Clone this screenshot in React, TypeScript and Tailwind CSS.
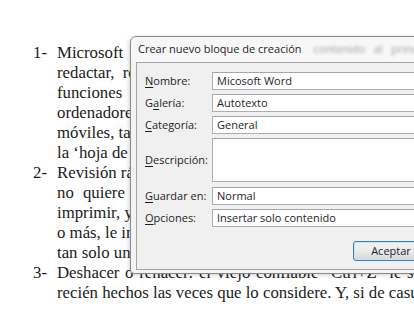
import React from "react";

const serif = { fontFamily: '"Liberation Serif", "Times New Roman", serif' };

function Line({ num, children, cls = "" }: { num?: string; children: React.ReactNode; cls?: string }) {
  return (
    <div className="flex h-[20px] items-center whitespace-nowrap">
      <div className="w-[24px] shrink-0">{num ?? ""}</div>
      <div className={cls}>{children}</div>
    </div>
  );
}

function Field({ children, tall = false }: { children?: React.ReactNode; tall?: boolean }) {
  return (
    <div
      className={`flex ${tall ? "h-[44px]" : "h-[18px]"} items-center whitespace-nowrap border border-[#abadb3] border-t-[#a3a6ad] bg-white pl-[4px] text-[#1e1e1e]`}
    >
      {children}
    </div>
  );
}

function Label({ pre, u, post }: { pre?: string; u: string; post: string }) {
  return (
    <div className="w-[67px] shrink-0 whitespace-nowrap text-[#1e1e1e]">
      {pre}
      <span className="underline underline-offset-[2px]">{u}</span>
      {post}
    </div>
  );
}

export default function App() {
  return (
    <div className="relative h-[314px] w-[414px] overflow-hidden bg-white">
      <div className="pl-[33px] pt-[43px] text-[16.8px] text-[#1b1b1b]" style={serif}>
        <Line num="1-" cls="[word-spacing:6px]">Microsoft Word es el procesador de textos más utilizado al momento de</Line>
        <Line cls="[word-spacing:4px]">redactar, revisar y editar documentos de todo tipo. Cuenta con</Line>
        <Line cls="[word-spacing:9px]">funciones muy útiles para el trabajo diario, tanto en</Line>
        <Line>ordenadores de escritorio como en portátiles y dispositivos</Line>
        <Line>móviles, tabletas y teléfonos. Su principal área de trabajo es</Line>
        <Line>la ‘hoja de papel’ en blanco.</Line>
        <Line num="2-">Revisión rápida de ortografía: si usted</Line>
        <Line cls="[word-spacing:5px]">no quiere perder tiempo revisando el texto antes de</Line>
        <Line>imprimir, y el documento tiene diez páginas</Line>
        <Line>o más, le indicará los errores con</Line>
        <Line>tan solo un clic.</Line>
        <Line num="3-" cls="[word-spacing:1.5px]">Deshacer o rehacer: el viejo confiable "Ctrl+Z" le será de ayuda para los cambios</Line>
        <Line>recién hechos las veces que lo considere. Y, si de casualidad se equivoca</Line>
      </div>

      <div
        className="absolute left-[130px] top-[36px] flex h-[238px] w-[300px] flex-col rounded-tl-[6px] rounded-bl-[4px] border border-[#8a8a8a] bg-[#f3f3f3] shadow-[-1px_1px_4px_rgba(0,0,0,0.18)]"
        style={{ fontFamily: '"Open Sans", "Noto Sans", sans-serif' }}
      >
        <div className="flex h-[25px] shrink-0 items-center overflow-hidden whitespace-nowrap rounded-tl-[6px] bg-[#f7f7f7] pl-[7px] text-[11px] text-[#1e1e1e]">
          <span className="shrink-0">Crear nuevo bloque de creación</span>
          <span className="ml-[12px] shrink-0 text-[#a0a0a0] blur-[1.4px]">
            contenido &nbsp; al &nbsp; principio
          </span>
        </div>
        <div className="mb-[3px] ml-[5px] flex flex-1 flex-col border-b border-l border-t border-[#a5a5a5] bg-[#f0f0f0] pl-[8px] pt-[9px] text-[11px]">
          <div className="flex items-center">
            <Label u="N" post="ombre:" />
            <div className="flex-1">
              <Field>Micosoft Word</Field>
            </div>
          </div>
          <div className="mt-[4px] flex items-center">
            <Label pre="G" u="a" post="lería:" />
            <div className="flex-1">
              <Field>Autotexto</Field>
            </div>
          </div>
          <div className="mt-[4px] flex items-center">
            <Label u="C" post="ategoría:" />
            <div className="flex-1">
              <Field>General</Field>
            </div>
          </div>
          <div className="mt-[4px] flex items-center">
            <Label u="D" post="escripción:" />
            <div className="flex-1">
              <Field tall />
            </div>
          </div>
          <div className="mt-[5px] flex items-center">
            <Label u="G" post="uardar en:" />
            <div className="flex-1">
              <Field>Normal</Field>
            </div>
          </div>
          <div className="mt-[4px] flex items-center">
            <Label u="O" post="pciones:" />
            <div className="flex-1">
              <Field>Insertar solo contenido</Field>
            </div>
          </div>
          <div className="mt-[14px] flex justify-start pl-[208px]">
            <div className="flex h-[20px] w-[76px] items-center justify-center rounded-[3px] border border-[#3c7fb1] bg-gradient-to-b from-[#f2f2f2] via-[#ebebeb] to-[#d6d6d6] text-[#1e1e1e] shadow-[inset_0_0_0_1px_#c4e5f6]">
              Aceptar
            </div>
          </div>
        </div>
      </div>
    </div>
  );
}
